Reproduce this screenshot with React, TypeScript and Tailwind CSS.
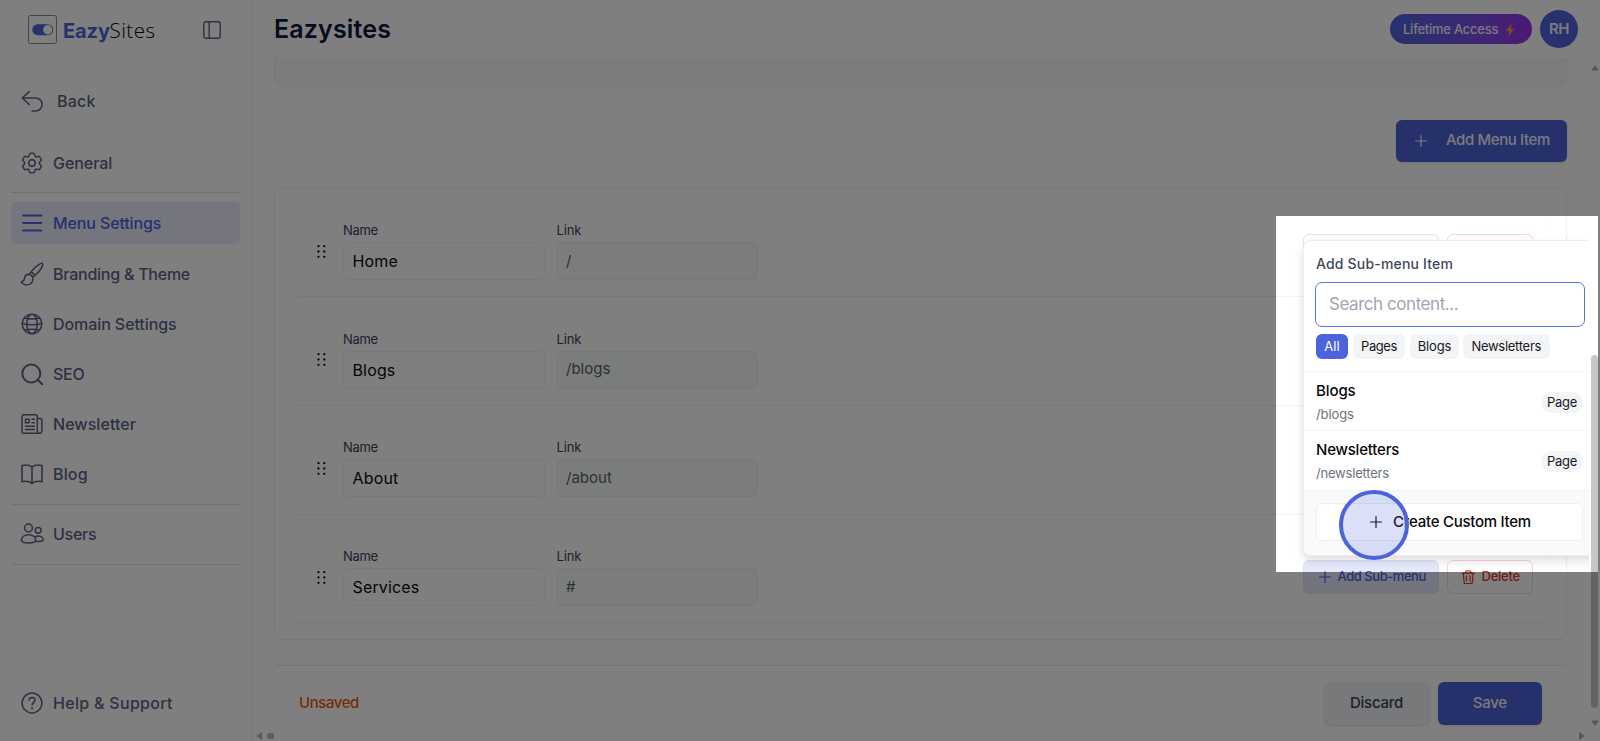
import type { ReactNode } from "react";
import { HiOutlineCog6Tooth } from "react-icons/hi2";

function Icon({ children, className = "size-6", sw = 1.5 }: { children: ReactNode; className?: string; sw?: number }) {
  return (
    <svg
      viewBox="0 0 24 24"
      className={`shrink-0 ${className}`}
      fill="none"
      stroke="currentColor"
      strokeWidth={sw}
      strokeLinecap="round"
      strokeLinejoin="round"
    >
      {children}
    </svg>
  );
}

const BackIcon = () => (
  <Icon>
    <path d="M9.3 2.6 2.3 9l7 6.6M2.5 9H15.6a6.5 6.5 0 0 1 0 13H12" />
  </Icon>
);
const MenuIcon = () => (
  <Icon sw={1.9}>
    <path d="M3 4.500h18.400M3 12h18.400M3 19.500h18.400" />
  </Icon>
);
const BrushIcon = () => (
  <Icon sw={1.5}>
    <path d="M9.2 12.4C12.5 7.6 17.3 3.2 20.6 1.6c1.6-.7 2.6.1 2 1.8-1.5 4-5.7 8.7-10 11.7M9.200 12.400c1.600.3 2.900 1.300 3.400 2.700M11.300 10.200c1.500.5 2.700 1.600 3.200 3M9.200 12.400c-2.600-.2-4.300 1.300-4.600 3.600-.3 2.200-1.300 3.700-3.300 4.100 1.500 2.400 5 3.300 7.900 2.300 3-1 4.400-4.200 3.400-7.300" />
  </Icon>
);
const GlobeIcon = () => (
  <Icon sw={1.5}>
    <circle cx="12" cy="12" r="9.8" />
    <ellipse cx="12" cy="12" rx="5.2" ry="9.8" />
    <path d="M2.2 11.500c6 1.500 13.600 1.500 19.600 0M4.300 6c4.800 1.200 10.600 1.200 15.400 0M4.500 18.300c4.700-1.200 10.300-1.200 15 0" />
  </Icon>
);
const SearchIcon = () => (
  <Icon sw={2}>
    <circle cx="11.3" cy="11.5" r="9" />
    <path d="m17.800 18 4.500 4.300" />
  </Icon>
);
const NewsIcon = () => (
  <Icon sw={1.5}>
    <path d="M17.300 21.200H4a2 2 0 0 1-2-2V4.800a2 2 0 0 1 2-2h11.300a2 2 0 0 1 2 2v14.100a2.300 2.300 0 0 0 4.600 0V8.200a1.600 1.600 0 0 0-1.600-1.600h-3M17.300 21.200h2.600" />
    <path d="M5.500 7.200h3.600v3.600H5.500zM12 7.200h2.300M12 10.800h2.300M5.500 14.300h8.800M5.500 17.600h8.800" />
  </Icon>
);
const BookIcon = () => (
  <Icon sw={1.6}>
    <path d="M12 5.100C9.500 3 5.800 2.600 2 3.500v16.200c3.800-.8 7.500-.4 10 1.700 2.500-2.100 6.200-2.500 10-1.700V3.500c-3.800-.9-7.500-.5-10 1.600Zm0 0v16.300" />
  </Icon>
);
const UsersIcon = () => (
  <Icon sw={1.5}>
    <circle cx="8.5" cy="6" r="3.9" />
    <circle cx="18.2" cy="8.300" r="2.9" />
    <path d="M1.500 18.300c0-3.300 2.900-5.500 7.100-5.500s7.100 2.200 7.100 5.500c0 1.800-3 2.700-7.100 2.700s-7.100-.9-7.100-2.700ZM14.500 15.300c1-.9 2.300-1.300 3.700-1.300 2.900 0 4.900 1.700 4.900 3.800 0 1.500-3.300 2.100-7.400 1.500" />
  </Icon>
);
const HelpIcon = () => (
  <Icon sw={1.5}>
    <circle cx="12" cy="12" r="9.9" />
    <path d="M9 9.200c.2-1.700 1.400-2.700 3-2.700 1.700 0 3 1 3 2.600 0 2.200-2.900 2.300-2.900 4.900" />
    <path d="M12.100 17.300v.1" strokeWidth="1.900" />
  </Icon>
);
const PlusIcon = ({ className }: { className: string }) => (
  <svg viewBox="0 0 12 12" className={`shrink-0 ${className}`} stroke="currentColor" strokeWidth="1.2" strokeLinecap="round">
    <path d="M6 .6v10.800M.6 6h10.800" />
  </svg>
);

function NavItem({ icon, label, track = "", active = false, gap = "gap-[9px]" }: { icon: ReactNode; label: string; track?: string; active?: boolean; gap?: string }) {
  return (
    <div
      className={`flex h-[42px] shrink-0 items-center rounded-[5px] pl-[9px] text-base font-[530] ${gap} ${
        active ? "bg-[#e9ebfa] text-[#4c63dc]" : "text-[#5c6284]"
      }`}
    >
      {icon}
      <span className={track}>{label}</span>
    </div>
  );
}

function Sidebar() {
  return (
    <aside className="flex w-[252px] shrink-0 flex-col border-r border-[#f4f4f6] pr-[11px] pl-[11px]">
      <div className="flex h-[59px] shrink-0 items-center pl-[17px]">
        <svg viewBox="0 0 29 29" className="size-[29px] shrink-0">
          <rect x=".5" y=".5" width="28" height="28" rx="2" fill="none" stroke="#888" />
          <rect x="4.3" y="9.2" width="21" height="11" rx="5.5" fill="#4c63dc" />
          <circle cx="19.8" cy="14.7" r="4.7" fill="#fff" />
        </svg>
        <div className="ml-[6px] flex items-baseline pt-px text-[20px]">
          <span className="w-[46.5px] font-bold tracking-[-0.1px] text-[#4c63dc]">Eazy</span>
          <span className="font-['Open_Sans'] text-[20.5px] font-[350] tracking-[0.5px] text-black">Sites</span>
        </div>
        <svg viewBox="0 0 18 18" className="mr-[19px] ml-auto size-[18px]" fill="none" stroke="#5c6284" strokeWidth="1.4">
          <rect x=".8" y=".8" width="16.4" height="16.4" rx="2" />
          <path d="M6.200 1v16" />
        </svg>
      </div>
      <nav className="flex flex-1 flex-col pt-[21px]">
        <NavItem icon={<BackIcon />} label="Back" gap="gap-[13px]" track="tracking-[0.2px]" />
        <div className="h-[20px] shrink-0" />
        <NavItem icon={<HiOutlineCog6Tooth className="-mx-px size-[26px] shrink-0" strokeWidth={1.4} />} label="General" track="tracking-[-0.04px]" />
        <div className="mt-[8.4px] mb-[9px] h-px shrink-0 bg-[#dfe1ec]" />
        <div className="flex flex-col gap-[8.2px]">
          <NavItem icon={<MenuIcon />} label="Menu Settings" track="tracking-[-0.12px]" active />
          <NavItem icon={<BrushIcon />} label="Branding & Theme" track="tracking-[-0.24px]" />
          <NavItem icon={<GlobeIcon />} label="Domain Settings" track="tracking-[-0.08px]" />
          <NavItem icon={<SearchIcon />} label="SEO" track="tracking-[-0.3px]" />
          <NavItem icon={<NewsIcon />} label="Newsletter" track="tracking-[0.06px]" />
          <NavItem icon={<BookIcon />} label="Blog" track="tracking-[0.15px]" />
        </div>
        <div className="my-[8.5px] h-px shrink-0 bg-[#dfe1f4]" />
        <NavItem icon={<UsersIcon />} label="Users" track="tracking-[-0.25px]" />
        <div className="my-[8.5px] h-px shrink-0 bg-[#dfe1f4]" />
        <div className="mt-auto pb-[17px]">
          <NavItem icon={<HelpIcon />} label="Help & Support" track="tracking-[0.3px]" />
        </div>
      </nav>
    </aside>
  );
}

function Header() {
  return (
    <header className="flex h-[59px] shrink-0 items-center border-b border-[#f4f4f6] pr-[22px] pl-[22px]">
      <h1 className="pt-[2px] text-[25px] font-semibold tracking-[0.15px] text-[#0f1838]">Eazysites</h1>
      <div className="mr-2 ml-auto flex h-[30px] w-[142px] items-center rounded-full bg-linear-to-r from-[#4c63dc] to-[#9333ea] pt-px pl-[13px] text-[13px] font-medium text-[#f4f4ff]">
        <span className="tracking-[-0.25px] whitespace-nowrap">Lifetime Access</span>
        <svg viewBox="0 0 10 14" className="ml-[7px] h-[14px] w-[10px]">
          <path d="M6.500.2.800 8h3.400l-.9 5.800L9.200 5.800H5.600Z" fill="#fb8a5c" />
        </svg>
      </div>
      <div className="grid size-[38px] place-items-center rounded-full bg-[#4c63dc] text-[15px] font-semibold tracking-[-0.5px] text-[#f4f4ff]">RH</div>
    </header>
  );
}

const DragHandle = () => (
  <svg viewBox="0 0 9 13" className="mt-[2.5px] ml-[25px] h-[13px] w-[9px] shrink-0" fill="#101022">
    {[1.2, 6.5, 11.8].map((y) => (
      <g key={y}>
        <circle cx="1.5" cy={y} r="1.15" />
        <circle cx="7.3" cy={y} r="1.15" />
      </g>
    ))}
  </svg>
);

type Actions = "none" | "outline" | "full";

function RowActions({ kind }: { kind: Actions }) {
  const full = kind === "full";
  return (
    <div className="mt-[2px] mr-[16px] ml-auto flex gap-2 text-[13px] font-medium">
      <div className={`flex h-[34px] w-[136px] items-center rounded-[6px] border border-[#dfe2fd] pl-[15px] text-[#4c63dc] ${full ? "bg-[#e6e9fb]" : "bg-white"}`}>
        {full && (
          <>
            <PlusIcon className="mr-[6.5px] size-[12px]" />
            <span className="tracking-[-0.45px] whitespace-nowrap">Add Sub-menu</span>
          </>
        )}
      </div>
      <div className="flex h-[34px] w-[86px] items-center rounded-[6px] border border-[#fdd5d5] pl-[13px] text-[#e0382f]">
        {full && (
          <>
            <Icon className="mr-[6px] size-[14.5px]" sw={2}>
              <path d="M1.500 5h21M7.500 5V3.500c0-1.200.8-2 2-2h5c1.200 0 2 .8 2 2V5M3.800 5l1.400 15.500c.1 1.400.9 2 2.200 2h9.200c1.300 0 2.100-.6 2.200-2L20.200 5M9 9.500V18M15 9.500V18" />
            </Icon>
            <span className="tracking-[-0.25px]">Delete</span>
          </>
        )}
      </div>
    </div>
  );
}

function MenuRow({ name, link, actions }: { name: string; link: string; actions: Actions }) {
  return (
    <div className="flex h-[108.7px] items-center rounded-b-[8px] border-x border-b border-x-[#fbfbfb] border-b-[#f3f3f4] pt-[15px]">
      <DragHandle />
      <div className="-mt-[2px] ml-[17px] flex gap-3 text-[13px] text-[#3b4260]">
        <label className="flex w-[201.5px] flex-col">
          <span className="h-[24px] leading-[24px] tracking-[-0.32px]">Name</span>
          <span className="flex h-[38px] items-center rounded-[5px] border border-[#f2f2f4] pl-[8.5px] text-base tracking-[0.15px] text-[#09090b]">{name}</span>
        </label>
        <label className="flex w-[201.5px] flex-col">
          <span className="h-[24px] leading-[24px] tracking-[-0.15px]">Link</span>
          <span className="flex h-[38px] items-center rounded-[5px] border border-[#ecf1ef] bg-[#f6fbf8] pl-[8.5px] text-[15px] text-[#5c6070]">{link}</span>
        </label>
      </div>
      {actions !== "none" && <RowActions kind={actions} />}
    </div>
  );
}

const items: { name: string; link: string; actions: Actions }[] = [
  { name: "Home", link: "/", actions: "outline" },
  { name: "Blogs", link: "/blogs", actions: "none" },
  { name: "About", link: "/about", actions: "none" },
  { name: "Services", link: "#", actions: "full" },
];

function Content() {
  return (
    <main className="flex flex-1 flex-col pr-[33px] pl-[22px]">
      <div className="h-[27.5px] shrink-0 rounded-b-[8px] border-x border-b border-[#ebf0ee] bg-[#f6fbf8]" />
      <div className="mt-[33px] ml-auto flex h-[42px] w-[171.5px] shrink-0 items-center rounded-[6px] bg-[#4c60d6] pl-[19px] text-[15px] font-[530] text-[#f4f4ff] shadow-sm">
        <PlusIcon className="mr-[19.5px] size-[12px]" />
        <span className="tracking-[-0.4px] whitespace-nowrap">Add Menu Item</span>
      </div>
      <section className="mt-[25px] h-[453px] shrink-0 rounded-[9px] border border-[#f1f1f3] px-[16px] pt-px">
        {items.map((item) => (
          <MenuRow key={item.name} {...item} />
        ))}
      </section>
      <footer className="mt-[25.5px] flex flex-1 items-start border-t border-[#eaeaee] pt-[16px] pr-[25px] pl-[25px] text-[15px] font-medium shadow-[0_0_4px_rgba(0,0,0,0.04)]">
        <span className="flex h-[42px] items-center tracking-[-0.42px] text-[#ea580c]">Unsaved</span>
        <div className="ml-auto grid h-[42.5px] w-[106px] place-items-center rounded-[6px] bg-[#f1f3f5] tracking-[-0.25px] text-[#3b3f52] shadow-sm">Discard</div>
        <div className="ml-2 grid h-[42.5px] w-[104.5px] place-items-center rounded-[6px] bg-[#4c60d6] font-[530] tracking-[-0.3px] text-[#f4f4ff] shadow-sm">Save</div>
      </footer>
    </main>
  );
}

function Scrollbars() {
  return (
    <>
      <svg viewBox="0 0 8 6" className="absolute top-[65px] left-[1591px] h-[6px] w-[8px]"><path d="M4 0 8 5.500H0Z" fill="#b0b0b0" /></svg>
      <div className="absolute top-[355px] left-[1591px] h-[353px] w-[7px] rounded-full bg-[#c6c6c6]" />
      <svg viewBox="0 0 8 6" className="absolute top-[720px] left-[1591px] h-[6px] w-[8px]"><path d="M4 6 8 .5H0Z" fill="#b0b0b0" /></svg>
      <svg viewBox="0 0 6 8" className="absolute top-[732px] left-[256px] h-[8px] w-[6px]"><path d="M0 4 6 0v8Z" fill="#b8b8b8" /></svg>
      <div className="absolute top-[733px] left-[267px] h-[6px] w-[7px] rounded-l-full bg-[#c0c0c0]" />
      <svg viewBox="0 0 6 8" className="absolute top-[732px] left-[1579px] h-[8px] w-[6px]"><path d="M6 4 0 0v8Z" fill="#b0b0b0" /></svg>
    </>
  );
}

function ResultRow({ title, path, track }: { title: string; path: string; track: string }) {
  return (
    <div className="flex h-[59.3px] shrink-0 items-center border-t border-[#f4f5f6] pt-[3px] pr-[19px] pl-[12px]">
      <div className="flex flex-col">
        <span className={`text-[15px] leading-[24px] font-medium text-[#09090b] ${track}`}>{title}</span>
        <span className={`text-[13px] leading-[23px] text-[#6b7280] ${track}`}>{path}</span>
      </div>
      <span className="ml-auto grid h-[21px] w-[42px] place-items-center rounded-full bg-[#f3f4f6] text-[13px] tracking-[-0.35px] text-[#18181b]">Page</span>
    </div>
  );
}

function SubMenuPopup() {
  return (
    <div className="absolute top-[225px] left-[1288px] h-[350px] w-[301px] overflow-hidden pt-[15px] pl-[15px]">
      <div className="flex h-[315.5px] w-[300px] flex-col overflow-hidden rounded-[8px] border border-[#eceef1] bg-white shadow-[0_5px_10px_rgba(0,0,0,0.13)]">
        <div className="h-[130px] shrink-0 pr-[18px] pl-[11px]">
          <div className="mt-[11.5px] h-[22px] pl-[1px] text-[14px] leading-[22px] font-medium tracking-[0.18px] text-[#3f4758]">Add Sub-menu Item</div>
          <div className="mt-[7px] flex h-[45px] w-[269.5px] items-center rounded-[7px] border-[1.5px] border-[#5b72e0] pt-[2px] pl-[13px] text-[17px] tracking-[-0.45px] text-[#a0a6b3]">Search content...</div>
          <div className="mt-[7px] flex h-[25.5px] gap-[5px] pl-[1px] text-[13px] text-[#18181b]">
            <span className="grid w-[32px] place-items-center rounded-[6px] bg-[#4c63dc] text-white">All</span>
            <span className="grid w-[52px] place-items-center rounded-[6px] bg-[#f3f4f6] tracking-[-0.4px]">Pages</span>
            <span className="grid w-[49px] place-items-center rounded-[6px] bg-[#f3f4f6] tracking-[-0.15px]">Blogs</span>
            <span className="-ml-px grid w-[86.5px] place-items-center rounded-[6px] bg-[#f3f4f6] tracking-[-0.28px]">Newsletters</span>
          </div>
        </div>
        <ResultRow title="Blogs" path="/blogs" track="tracking-[-0.1px]" />
        <ResultRow title="Newsletters" path="/newsletters" track="tracking-[-0.2px]" />
        <div className="flex-1 border-t border-[#f1f2f4] bg-[#f9fafb] pt-[12px] pl-[12px]">
          <div className="flex h-[38.5px] w-[267px] items-center rounded-[6px] border border-[#eceef1] bg-white pl-[53px] text-[15px] font-medium text-[#09090b]">
            <PlusIcon className="mr-[11px] size-[12px]" />
            <span className="tracking-[-0.26px] whitespace-nowrap">Create Custom Item</span>
          </div>
        </div>
      </div>
    </div>
  );
}

export default function App() {
  return (
    <div className="relative flex h-[741px] w-[1600px] overflow-hidden bg-white font-['Inter',sans-serif]">
      <Sidebar />
      <div className="flex flex-1 flex-col">
        <Header />
        <Content />
      </div>
      <Scrollbars />
      <SubMenuPopup />
      <div className="absolute top-[216px] left-[1276px] h-[356px] w-[322px] shadow-[0_0_0_2000px_rgba(0,0,0,0.5)]" />
      <div className="absolute top-[490px] left-[1339px] size-[70px] rounded-full border-4 border-[#4c63dc] bg-[#4c63dc]/20" />
    </div>
  );
}
